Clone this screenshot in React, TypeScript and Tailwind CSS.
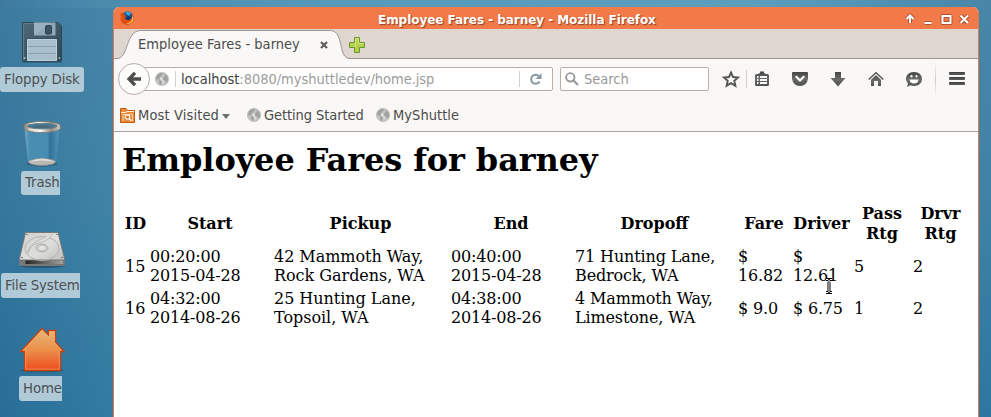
import React from "react";

const GLOBE_LAND = "M3 3.2Q5 1 7.4 1L8.6 2.2 7 3.4 7.8 4.6 6 5.6 5.2 7.2 7 8 6.6 10 5 12.4 4 9.6 1.6 7.6 1.2 5.4ZM9.4 3.2 12 3.6 13 6 12.6 9 11 11.2 10 9 10.4 7.4 8.6 6.6 8.8 4.6Z";

function Globe() {
  return (
    <svg width="14" height="14" viewBox="0 0 14 14" className="shrink-0">
      <circle cx="7" cy="7" r="6.6" fill="#c6c6c5" stroke="#b8b8b7" strokeWidth=".8" />
      <path d="M2.500 3Q4 1.200 6.500 1L8 2 6 4 4.500 5 4 7 2 7.500 1 6ZM9 2 12 4 13 7 12.400 9.500 11 10 9.500 8 8 7.500 8.500 5 10 4ZM4.500 8 7 9 6.500 11.500 5.500 13 4 11Z" fill="#9f9f9e" />
      <path d={GLOBE_LAND} fill="#a4a4a3" opacity=".4" />
      <path d="M5.500 5.500 7.500 5 7 7.500 9 9.500 8 12 7 9 5 7.500Z" fill="#e2e2e1" />
    </svg>
  );
}

function Floppy() {
  return (
    <svg width="42" height="42" viewBox="0 0 42 42">
      <defs>
        <linearGradient id="fd" x1="0" y1="0" x2="1" y2="1">
          <stop offset="0" stopColor="#4d6878" />
          <stop offset="1" stopColor="#304858" />
        </linearGradient>
      </defs>
      <rect x="1" y="39" width="40" height="3" rx="1.5" fill="#173b52" opacity=".3" />
      <path d="M1.5 1.5H37L40.5 5V39.5Q40.5 40.5 39.5 40.5H2.5Q1.5 40.5 1.5 39.5Z" fill="url(#fd)" stroke="#2d4656" />
      <path d="M2.5 39V2.5H13" fill="none" stroke="#657e8c" />
      <rect x="13" y="1.5" width="21.5" height="13" fill="#8ea8b6" />
      <path d="M13 14.5V1.5H30Z" fill="#a2b8c4" opacity=".6" />
      <rect x="24.5" y="4.5" width="6" height="8.5" rx="1" fill="#3c5364" stroke="#2b4456" />
      <rect x="5.5" y="18" width="31" height="22" fill="#a9c0cc" stroke="#33505f" />
      <path d="M6 25.5H36M6 32.5H36" stroke="#879fae" />
      <path d="M6.5 18.5H35.5V39.5H6.5Z" fill="none" stroke="#bfd1db" />
      <path d="M3 36h1.5v2H3zM37.7 36h1.5v2h-1.5z" fill="#9db0bb" />
    </svg>
  );
}

function Trash() {
  return (
    <svg width="40" height="48" viewBox="0 0 40 48">
      <defs>
        <linearGradient id="rim" x1="0" x2="1">
          <stop offset="0" stopColor="#77756f" />
          <stop offset=".2" stopColor="#d9d8d3" />
          <stop offset=".45" stopColor="#ffffff" />
          <stop offset=".75" stopColor="#8f8e88" />
          <stop offset="1" stopColor="#c9c8c3" />
        </linearGradient>
        <linearGradient id="glass" x1="0" x2="1">
          <stop offset="0" stopColor="#7fb4d0" stopOpacity=".9" />
          <stop offset=".15" stopColor="#4f94ba" stopOpacity=".7" />
          <stop offset=".65" stopColor="#5098be" stopOpacity=".6" />
          <stop offset=".73" stopColor="#2c6e94" stopOpacity=".7" />
          <stop offset="1" stopColor="#5a9dc0" stopOpacity=".8" />
        </linearGradient>
      </defs>
      <ellipse cx="20" cy="43.500" rx="15" ry="3" fill="#143a52" opacity=".45" />
      <path d="M2.5 8 6 42Q20 47 34 42L37.5 8Z" fill="url(#glass)" />
      <ellipse cx="20" cy="42" rx="13.5" ry="3.4" fill="#b9b7b2" stroke="#8d8c88" strokeWidth=".7" />
      <path d="M7 42Q20 35 33 42Q20 39 7 42Z" fill="#e0dfdc" />
      <path fillRule="evenodd" d="M1.5 6C1.5 0 38.5 0 38.5 6V8C38.5 14 1.5 14 1.5 8ZM5 6C8 10 32 10 35 6C32 2.5 8 2.5 5 6Z" fill="url(#rim)" stroke="#73726d" strokeWidth=".8" />
      <path d="M8 6.8Q20 3.8 32 6.8Q20 9.3 8 6.8Z" fill="#526873" />
    </svg>
  );
}

function Drive() {
  return (
    <svg width="48" height="38" viewBox="0 0 48 38">
      <defs>
        <linearGradient id="hd" x1="0" y1="0" x2="1" y2="1">
          <stop offset="0" stopColor="#d0d0ce" />
          <stop offset=".5" stopColor="#dededd" />
          <stop offset="1" stopColor="#b8b8b6" />
        </linearGradient>
        <linearGradient id="hdf" x1="0" x2="1">
          <stop offset="0" stopColor="#242424" />
          <stop offset="1" stopColor="#a3a3a1" />
        </linearGradient>
      </defs>
      <ellipse cx="24" cy="35" rx="23" ry="2" fill="#173b52" opacity=".5" />
      <path d="M7.5 1.5H40L46.5 27.5V33.5Q46.5 34.5 45.5 34.5H2.5Q1.5 34.5 1.5 33.5V27.5Z" fill="url(#hd)" stroke="#777775" />
      <path d="M2 28.5H46V34H2Z" fill="#777775" />
      <path d="M7.5 29.5H45V33H7.5Z" fill="url(#hdf)" />
      <ellipse cx="24" cy="17.5" rx="17" ry="12" fill="none" stroke="#b3b2b0" />
      <path d="M34 3Q31 10 20 12Q9 15 10 22Q13 11 28 6" fill="#dededd" stroke="#b3b2b0" strokeWidth=".8" />
      <ellipse cx="24" cy="17" rx="6" ry="3.8" fill="#d2d2d0" stroke="#a8a8a5" />
      <ellipse cx="24" cy="17" rx="3.8" ry="2.2" fill="#e8e8e6" stroke="#b8b8b5" strokeWidth=".6" />
      <path d="M3 26h2v1H3zM43 26h2v1h-2zM8 3h1.5v1H8zM38 3h1.5v1H38z" fill="#777" />
    </svg>
  );
}

function HomeFolder() {
  return (
    <svg width="48" height="46" viewBox="0 0 48 46">
      <defs>
        <linearGradient id="hm" x1="0" y1="0" x2="0" y2="1">
          <stop offset="0" stopColor="#e9b878" />
          <stop offset=".5" stopColor="#ea914c" />
          <stop offset="1" stopColor="#ee4b1b" />
        </linearGradient>
      </defs>
      <ellipse cx="24" cy="42.500" rx="22" ry="2" fill="#173b52" opacity=".35" />
      <g transform="translate(0 -1)">
        <path d="M24 1.5 30.5 8V3.5H37.5V15L46 24.5H42.5V43.5H6.5V24.5H2.5Z" fill="url(#hm)" stroke="#c4400f" strokeWidth="1.3" />
        <path d="M24 3.5 31.5 11V4.8H36.3V15.5L43.5 23.3H41.3V42.2H7.7V23.3H5.2Z" fill="none" stroke="#f6b27a" strokeWidth=".8" opacity=".75" />
      </g>
    </svg>
  );
}

function DesktopItem({ icon, label, iconPos, labelPos }: { icon: React.ReactNode; label: string; iconPos: string; labelPos: string }) {
  return (
    <>
      <div className={"absolute " + iconPos}>{icon}</div>
      <div className={"absolute flex items-center overflow-hidden whitespace-nowrap bg-[#b1cad8] text-[13.33px] text-[#4b4f52] " + labelPos}>{label}</div>
    </>
  );
}

function TitleBar() {
  return (
    <div className="relative flex h-[22px] items-center justify-end rounded-t-[5px] bg-[#f17a48] pr-[6px]">
      <svg width="16" height="16" viewBox="0 0 16 16" className="absolute left-[5px] top-[3px]">
        <circle cx="8" cy="8" r="6.5" fill="#e66a16" />
        <circle cx="8.5" cy="6.4" r="5.2" fill="#17559e" />
        <path d="M6 2Q9 0 12 3L10 6 7 4Z" fill="#36a5d6" />
        <path d="M9 6 12 7 10 11 6 9Z" fill="#123468" />
        <path d="M2 2.5 4 4 5.5 3.2 5.5 5 7.6 6.2 5.8 7.3Q6 9.8 9 10Q12.5 9.8 13.2 6.5L12.7 3.3Q15.5 6 14.6 9.8Q13 14.8 8 14.8Q2.4 14.4 1.2 9Q.8 5 2 2.5Z" fill="#dc4d16" />
        <path d="M11 12Q14 9 13.4 5Q15.3 8.5 13.5 11.5Q11 14.6 7 14Z" fill="#f6c145" />
        <path d="M2 5Q2 9 4 11Q2 9.6 1.4 7Z" fill="#f69b2d" />
      </svg>
      <span className="absolute left-[264px] top-[4px] text-[12px] font-bold leading-[18px] tracking-[-0.05px] whitespace-nowrap text-white [text-shadow:1px_1px_1px_#8c4528]">
        Employee Fares - barney - Mozilla Firefox
      </span>
      <svg width="72" height="16" viewBox="0 0 72 16" className="mt-px">
        <g fill="none" stroke="#ad5432" strokeWidth="4" strokeLinejoin="round">
          <path d="M10 12V6M6.5 8 10 4.5 13.5 8M24.500 12H31.500M42.500 5H50.500V12H42.500ZM60.500 4.500 68 12M68 4.500 60.500 12" />
        </g>
        <g fill="none" stroke="#fff" strokeWidth="2">
          <path d="M10 12V6M6.5 8 10 4.5 13.5 8M24.500 12H31.500M42.500 5H50.500V12H42.500ZM60.500 4.500 68 12M68 4.500 60.500 12" />
        </g>
      </svg>
    </div>
  );
}

function TabStrip() {
  return (
    <div className="flex h-[30px] items-center border-b border-[#9c9590] bg-[#dfd6d0]">
      <div className="relative flex h-[30px] w-[235px] items-center pl-[24px]">
        <svg width="236" height="31" viewBox="0 0 236 31" className="absolute left-0 top-0">
          <path d="M0 29.500H3C15 29.500 11 1.500 27 1.500H216C231 1.500 223 29.500 236 29.500V31H0Z" fill="#f9f8f6" />
          <path d="M0 29.500H3C15 29.500 11 1.500 27 1.500H216C231 1.500 223 29.500 236 29.500" fill="none" stroke="#9c9590" />
        </svg>
        <span className="relative top-px whitespace-nowrap text-[14.5px] tracking-[0.03px] text-[#4c4c4c]">Employee Fares - barney</span>
        <svg width="8" height="8" viewBox="0 0 8 8" className="absolute left-[206px] top-[12px]">
          <path d="M1 1 7 7M7 1 1 7" stroke="#62605e" strokeWidth="2.300" />
        </svg>
      </div>
      <svg width="16" height="16" viewBox="0 0 16 16" className="mt-[2px]">
        <path d="M5.500 .5H10.500V5.500H15.500V10.500H10.500V15.500H5.500V10.500H.5V5.500H5.500Z" fill="#b4d149" stroke="#66962d" />
        <path d="M6.500 10V1.500H9.500V6.500H14.500" fill="none" stroke="#d7e78e" />
      </svg>
    </div>
  );
}

function ToolbarIcons() {
  return (
    <svg width="264" height="40" viewBox="714 59 264 40" className="shrink-0">
      <defs>
        <linearGradient id="ic" x1="0" y1="0" x2="0" y2="1">
          <stop offset="0" stopColor="#454545" />
          <stop offset=".5" stopColor="#6b6b6b" />
          <stop offset="1" stopColor="#505050" />
        </linearGradient>
        <linearGradient id="sep" x1="0" y1="0" x2="0" y2="1">
          <stop offset="0" stopColor="#cfccc8" stopOpacity="0" />
          <stop offset=".5" stopColor="#cfccc8" />
          <stop offset="1" stopColor="#cfccc8" stopOpacity="0" />
        </linearGradient>
      </defs>
      <path d="M731 72.500 733 77 738 77.500 734.300 80.800 735.400 85.800 731 83.200 726.600 85.800 727.700 80.800 724 77.500 729 77Z" fill="none" stroke="#555" strokeWidth="1.900" />
      <path d="M746.500 70V88" stroke="#d3d1ce" />
      <path fillRule="evenodd" d="M755 75.500Q755 74 756.500 74H758L760 73V71.500H764V73L766 74H767.500Q769 74 769 75.500V84.500Q769 86 767.500 86H756.500Q755 86 755 84.500ZM757 76V78H758.500V76ZM760 76V78H767V76ZM757 79V81H758.500V79ZM760 79V81H767V79ZM757 82V84H758.500V82ZM760 82V84H767V82Z" fill="url(#ic)" />
      <path d="M793 72H807Q808 72 808 73V78.500Q807 86 800 86Q793 86 792 78.500V73Q792 72 793 72Z" fill="url(#ic)" />
      <path d="M796.300 76.800 800 80.500 803.700 76.800" fill="none" stroke="white" strokeWidth="2.200" strokeLinecap="round" strokeLinejoin="round" />
      <path d="M835 72H841V78H845.500L838 86.500 830.500 78H835Z" fill="url(#ic)" />
      <path d="M868.700 79.500 876 72.700 883.300 79.500" fill="none" stroke="#555" strokeWidth="1.500" />
      <path d="M876 75.200 881 79.800V86H878V81H874V86H871V79.800Z" fill="url(#ic)" />
      <path d="M914 72C919 72 922 75 922 79S919 86 914 86Q912 86 910.500 85.300L907 87 908 83.500Q906 81.500 906 79C906 75 909 72 914 72Z" fill="url(#ic)" />
      <path d="M909.500 79.500H918.500Q918 83.500 914 83.500Q910 83.500 909.500 79.500Z" fill="white" />
      <ellipse cx="911.500" cy="76.200" rx="1" ry="1.300" fill="white" />
      <ellipse cx="916.500" cy="76.200" rx="1" ry="1.300" fill="white" />
      <rect x="935" y="61" width="1" height="37" fill="url(#sep)" />
      <rect x="949" y="72" width="16" height="3" rx="1" fill="#555558" />
      <rect x="949" y="77" width="16" height="3" rx="1" fill="#555558" />
      <rect x="949" y="82" width="16" height="3" rx="1" fill="#555558" />
      <path d="M949.500 72H964.500V73H949.500ZM949.500 77H964.500V78H949.500ZM949.500 82H964.500V83H949.500Z" fill="#414141" />
    </svg>
  );
}

function NavBar() {
  return (
    <div className="relative flex h-[40px] items-center pl-[20px]">
      <div className="flex h-[24px] w-[419px] shrink-0 items-center rounded-r-[2px] border border-[#b8aea6] bg-white pl-[20px]">
        <Globe />
        <i className="ml-[6px] h-[16px] w-px bg-[#d3d1ce]" />
        <span className="ml-[5px] pt-[2px] whitespace-nowrap text-[14.5px] tracking-[-0.03px] text-[#9c9c9c]">
          <span className="text-[#3e3e3e]">localhost</span>:8080/myshuttledev/home.jsp
        </span>
        <i className="ml-auto h-[16px] w-px bg-[#d3d1ce]" />
        <svg width="12" height="12" viewBox="0 0 12 12" className="ml-[10px] mr-[10px]">
          <path d="M9.500 8.500Q8.500 10.700 5.500 10.700Q1.200 10.300 1.200 6.200Q1.500 2 5.500 1.800Q7.500 1.800 9 3.400" fill="none" stroke="#8c9aa6" strokeWidth="2" />
          <path d="M11.500 0V6H5.500Z" fill="#8c9aa6" />
        </svg>
      </div>
      <div className="absolute left-[4px] top-[4px] flex h-[32px] w-[32px] items-center justify-center rounded-full border border-[#b8aea6] bg-[#fcfcfb]">
        <svg width="14" height="14" viewBox="0 0 14 14">
          <path d="M8 .8 2 7 8 13.200M2 7H14" fill="none" stroke="#4d4d4d" strokeWidth="3.300" />
        </svg>
      </div>
      <div className="ml-[7px] mr-[5px] flex h-[24px] w-[149px] shrink-0 items-center rounded-[2px] border border-[#b8aea6] bg-white pl-[4px]">
        <svg width="14" height="14" viewBox="0 0 14 14">
          <circle cx="5.300" cy="5.300" r="4.200" fill="none" stroke="#999" strokeWidth="1.900" />
          <path d="M8.500 8.500 13 13" stroke="#999" strokeWidth="2.300" />
        </svg>
        <span className="ml-[5px] pt-[2px] text-[14.5px] text-[#989898]">Search</span>
      </div>
      <ToolbarIcons />
    </div>
  );
}

function Bookmarks() {
  return (
    <div className="flex h-[33px] items-center border-b border-[#aaa5a1] pl-[6px] text-[14.5px] whitespace-nowrap text-[#4c4c4c]">
      <svg width="15" height="15" viewBox="0 0 15 15">
        <path d="M.5 14.500V.5H6L7.500 2.500H14.500V14.500Z" fill="#e98a3c" stroke="#c25a0d" />
        <path d="M1 4.500H5.500L7 3.500H14" fill="none" stroke="#fff0dd" />
        <path d="M3 6.500H12.500M3 6.500V13M12.500 6.500V13" fill="none" stroke="#f7d4af" />
        <circle cx="7.500" cy="9" r="2.200" fill="#d8782c" stroke="#fff0dd" strokeWidth="1.200" />
        <path d="M9 10.500 11.500 13" stroke="#fff0dd" strokeWidth="1.400" />
      </svg>
      <span className="ml-[3px] w-[84px] pt-[2px] tracking-[0.14px]">Most Visited</span>
      <svg width="8" height="5" viewBox="0 0 8 5" className="mt-[3px]"><path d="M0 0H8L4 5Z" fill="#6e6e6e" /></svg>
      <span className="ml-[17px] flex items-center gap-[3px]"><Globe /><span className="w-[100px] pt-[2px] tracking-[-0.08px]">Getting Started</span></span>
      <span className="ml-[12px] flex items-center gap-[3px]"><Globe /><span className="pt-[2px] tracking-[0.05px]">MyShuttle</span></span>
    </div>
  );
}

const HEADERS = ["ID", "Start", "Pickup", "End", "Dropoff", "Fare", "Driver", "Pass Rtg", "Drvr Rtg"];
const WIDTHS = ["w-[23px]", "w-[122px]", "w-[175px]", "w-[122px]", "w-[161px]", "w-[53px]", "w-[59px]", "w-[57px]", "w-[57px]"];
const TRACKING = ["", "tracking-[-0.18px]", "tracking-[-0.03px]", "tracking-[-0.18px]", "tracking-[-0.13px]", "tracking-[-0.15px]", "tracking-[-0.18px]", "", ""];
const ROWS = [
  ["15", "00:20:00\n2015-04-28", "42 Mammoth Way,\nRock Gardens, WA", "00:40:00\n2015-04-28", "71 Hunting Lane,\nBedrock, WA", "$\n16.82", "$\n12.61", "5", "2"],
  ["16", "04:32:00\n2014-08-26", "25 Hunting Lane,\nTopsoil, WA", "04:38:00\n2014-08-26", "4 Mammoth Way,\nLimestone, WA", "$ 9.0", "$ 6.75", "1", "2"],
];

function Page() {
  return (
    <div className="h-[285px] bg-white px-[8px] font-['DejaVu_Serif',serif] text-black">
      <h1 className="h-[69px] pt-[9px] text-[32px] font-bold leading-[38px] tracking-[-0.1px] whitespace-nowrap">Employee Fares for barney</h1>
      <table className="w-[849px] table-fixed border-separate border-spacing-[2px] text-[16px] leading-[19px]">
        <thead>
          <tr className="h-[41px] leading-[20px]">
            {HEADERS.map((h, i) => (
              <th key={h} className={"p-0 align-middle font-bold " + (i === 5 || i === 7 ? "pl-px " : "") + WIDTHS[i]}>{h}</th>
            ))}
          </tr>
        </thead>
        <tbody>
          {ROWS.map((r) => (
            <tr key={r[0]} className="h-[40px]">
              {r.map((c, i) => (
                <td key={i} className={"whitespace-pre p-px align-middle " + TRACKING[i]}>{c}</td>
              ))}
            </tr>
          ))}
        </tbody>
      </table>
    </div>
  );
}

export default function App() {
  return (
    <main className="relative h-[417px] w-[991px] overflow-hidden bg-[#397ca1] bg-[linear-gradient(90deg,rgba(44,108,147,.45)_0%,rgba(66,136,168,.5)_12%,rgba(66,136,168,.3)_100%),linear-gradient(180deg,#4b85a8_0%,#3f80a5_45%,#246f9b_100%)] font-['DejaVu_Sans',sans-serif]">
      <div className="absolute inset-x-0 top-0 h-[8px] bg-[linear-gradient(90deg,transparent_0%,#5799b9_35%,#5d9ebd_75%,transparent_100%)]" />
      <DesktopItem icon={<Floppy />} label="Floppy Disk" iconPos="left-[21px] top-[21px]" labelPos="left-0 top-[67px] h-[25px] w-[84px] rounded-[3px] pl-[4px] tracking-[-0.15px]" />
      <DesktopItem icon={<Trash />} label="Trash" iconPos="left-[22px] top-[120px]" labelPos="left-[21px] top-[171px] h-[24px] w-[39px] rounded-l-[3px] pl-[4px] tracking-[-0.1px]" />
      <DesktopItem icon={<Drive />} label="File System" iconPos="left-[18px] top-[231px]" labelPos="left-[1px] top-[273px] h-[25px] w-[79px] rounded-l-[3px] pl-[4px] tracking-[-0.15px]" />
      <DesktopItem icon={<HomeFolder />} label="Home" iconPos="left-[18px] top-[328px]" labelPos="left-[19px] top-[376px] h-[25px] w-[43px] rounded-l-[3px] pl-[4px] tracking-[-0.1px]" />
      <section className="absolute left-[113px] top-[7px] h-[410px] w-[866px] overflow-hidden rounded-t-[6px] border-x border-[#e27850] bg-[#f9f8f6]">
        <TitleBar />
        <div className="font-['DejaVu_Sans_Condensed','DejaVu_Sans',sans-serif]">
          <TabStrip />
          <NavBar />
          <Bookmarks />
        </div>
        <Page />
      </section>
      <svg width="9" height="17" viewBox="0.5 0.5 9 17" className="absolute left-[824px] top-[278px]">
        <path d="M1.500 2H3.500L4.500 3 5.500 2H7.500M4.500 3V14M1.500 15H3.500L4.500 14 5.500 15H7.500" transform="translate(1)" fill="none" stroke="black" strokeWidth="3" />
        <path d="M1.500 2H3.500L4.500 3 5.500 2H7.500M4.500 3V14M1.500 15H3.500L4.500 14 5.500 15H7.500" transform="translate(1)" fill="none" stroke="white" strokeWidth="1" />
      </svg>
    </main>
  );
}
